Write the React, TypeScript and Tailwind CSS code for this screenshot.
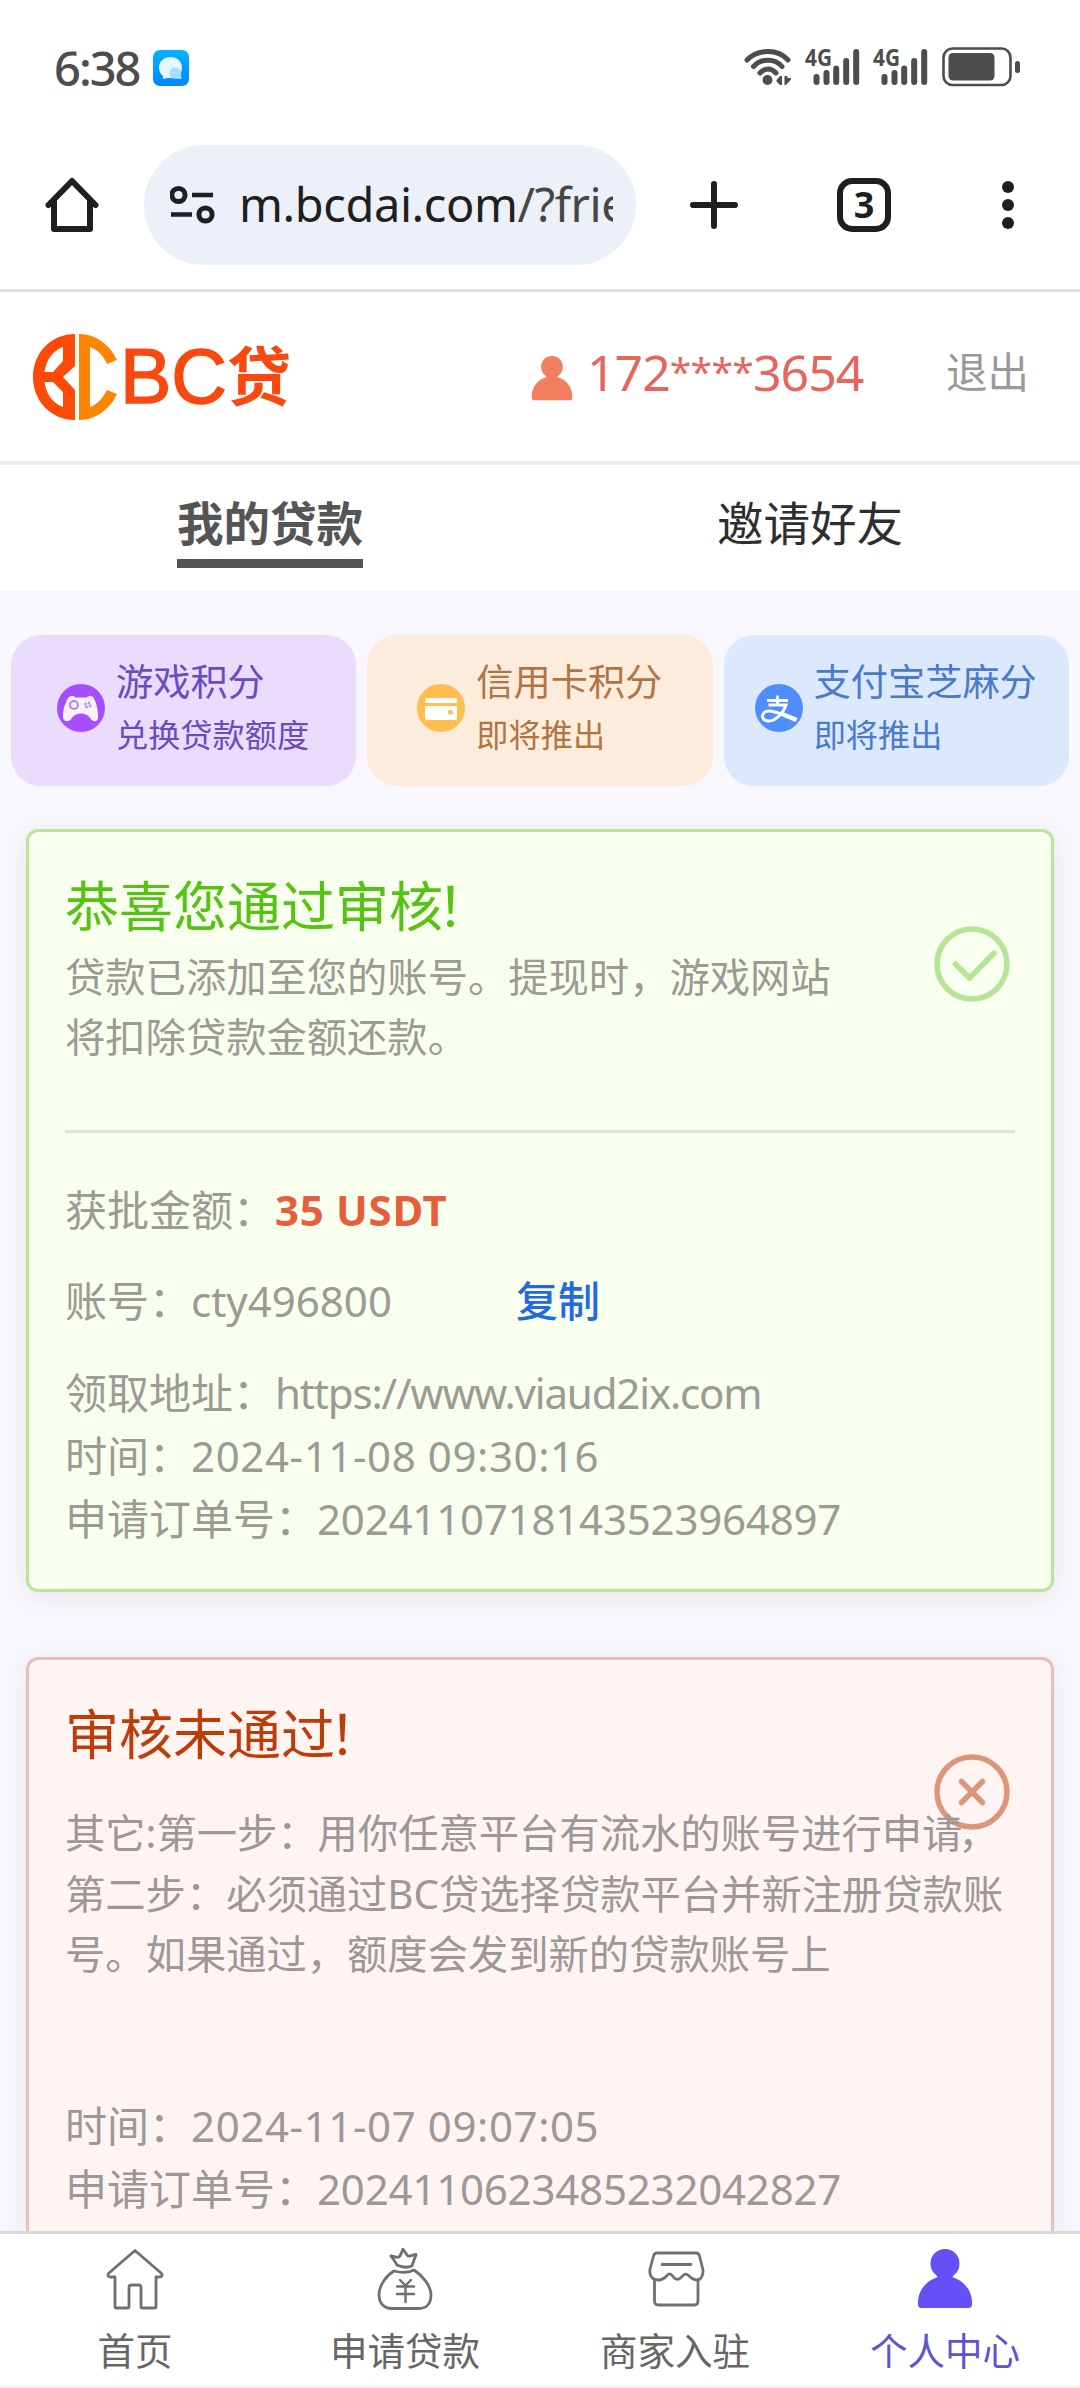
import type { ReactNode } from "react";

interface PointCard {
  title: string;
  sub: string;
  box: string;
  icon: ReactNode;
}

interface NavItem {
  label: string;
  color: string;
  icon: ReactNode;
}

const personPath = "M29 1C20.500 1 14.500 7.500 14.500 15.500C14.500 20.500 16.500 24.500 20.500 27.500C22 28.700 21.500 29.300 20 29.800C9.500 33.500 2 43 2 54V56.500C2 58.500 3.200 60 5.200 60H52.800C54.800 60 56 58.500 56 56.500V54C56 43 48.500 33.500 38 29.800C36.500 29.300 36 28.700 37.500 27.500C41.500 24.500 43.500 20.500 43.500 15.500C43.500 7.500 37.500 1 29 1Z";

const pointCards: PointCard[] = [
  {
    title: "游戏积分",
    sub: "兑换贷款额度",
    box: "bg-[#e9dcfc] text-[#6b4bbf] pl-[46px]",
    icon: (
      <svg className="w-12 h-12 shrink-0" viewBox="0 0 48 48">
        <circle cx="24" cy="24" r="24" fill="#a64dff" />
        <path d="M12 13C14 11.500 17 12 18.500 13.500H29.500C31 12 34 11.500 36 13C39.500 18 41.500 27 41 34C40.500 38 37 38 34 35.500C32 31.500 28 29.500 24 29.500C20 29.500 16 31.500 14 35.500C11 38 7.500 38 6 34C5.500 27 8 18 12 13Z" fill="#f8efff" />
        <circle cx="17" cy="21" r="4" fill="none" stroke="#a98be0" strokeWidth="2" />
        <g fill="#b69ae0"><circle cx="28.500" cy="20" r="1.400" /><circle cx="32" cy="19" r="1.400" /><circle cx="29.500" cy="23" r="1.400" /><circle cx="33" cy="22" r="1.400" /></g>
      </svg>
    ),
  },
  {
    title: "信用卡积分",
    sub: "即将推出",
    box: "bg-[#fdecdc] text-[#b07545] pl-[50px]",
    icon: (
      <svg className="w-12 h-12 shrink-0" viewBox="0 0 48 48">
        <circle cx="24" cy="24" r="24" fill="#ffbe4f" />
        <path d="M10 14H38A2 2 0 0 1 40 16V19H8V16A2 2 0 0 1 10 14ZM8 22H40V34A2 2 0 0 1 38 36H10A2 2 0 0 1 8 34Z" fill="#fff" />
        <rect x="31" y="26" width="5" height="4.500" rx="1" fill="#f3c377" />
      </svg>
    ),
  },
  {
    title: "支付宝芝麻分",
    sub: "即将推出",
    box: "bg-[#dce8fb] text-[#4a7bc8] pl-[31px]",
    icon: (
      <svg className="w-12 h-12 shrink-0" viewBox="0 0 48 48" fill="none" stroke="#fff">
        <circle cx="24" cy="24" r="24" fill="#508dff" stroke="none" />
        <path d="M12 16.500H33M22.500 11.500V20.500" strokeWidth="2.800" />
        <path d="M13.500 21H31C29 27 24 33 18.500 36C14 38 8.500 37 7.500 33C7 29 10.500 26.500 15 27C23 28 32 32 41.500 35.500" strokeWidth="3" />
        <path d="M27 30L41.500 36" strokeWidth="4.500" />
      </svg>
    ),
  },
];

const navItems: NavItem[] = [
  {
    label: "首页",
    color: "text-[#666]",
    icon: (
      <path d="M29 2.500L3 25C1 27 2 29 4.500 29H9V58.500Q9 60 10.500 60H21.500Q23 60 23 58.500V39.500Q23 37 25.500 37H32.500Q35 37 35 39.500V58.500Q35 60 36.500 60H48.500Q50 60 50 58.500V29H53.500C56 29 57 27 55 25Z" />
    ),
  },
  {
    label: "申请贷款",
    color: "text-[#666]",
    icon: (
      <>
        <path d="M21 17C19 13 17 11 15 8C18 8 20 10 23 9C25 7 26 4 27 1C29 3.500 30 6 32 8C35 8.500 37 6.500 40 6.500C39 10 37 14 36 18C31 20 26 19.500 21 17ZM18 23C25 25 32 25 38 22C47 28 55 38 55 47C55 56 50 60.500 43 60.500H16C8 60.500 3 55 3 47C3 37 11 27 18 23Z" />
        <path d="M24 32L29.500 37.500L35 32M21 38.500H38M21 46H38M29.500 38V54" strokeWidth="2.400" />
      </>
    ),
  },
  {
    label: "商家入驻",
    color: "text-[#666]",
    icon: (
      <>
        <path d="M11 5H50C52 5 53 6 53.500 8L57 22C57.500 27 55 32 51 32C47 32 45 30 42.500 27.500C40 25.500 39 25.500 37 27.500C33 32.500 30 32.500 27 28.500C24 25 23 25.500 21 27.500C18 31 15 32 12 32C6 32 3 27 4 21L7.500 8C8 6 9 5 11 5Z" />
        <path d="M8.500 32V53Q8.500 57 12.500 57H48.500Q52 57 52 53V32M16 16.500H45" />
      </>
    ),
  },
  { label: "个人中心", color: "text-[#6152d2]", icon: <path d={personPath} fill="#6450f5" stroke="none" /> },
];

const Signal = () => (
  <svg className="w-[56px] h-[50px] -mt-[10px] -ml-[2px]" viewBox="-2 -10 56 50">
    <text x="-1" y="20" fontSize="24" fontWeight="700" textLength="27" lengthAdjust="spacingAndGlyphs" fill="#4d4d4d">4G</text>
    <path d="M10.500 31V36M20.500 27V36M30.200 22.500V36M40.200 15V36M50.200 6V36" stroke="#4d4d4d" strokeWidth="6" strokeLinecap="round" />
  </svg>
);

const StatusBar = () => (
  <div className="h-[135px] pt-[46px] pl-[54px] pr-[59px] flex items-start">
    <span className="w-[99px] h-11 leading-[44px] text-[47px] font-medium tracking-[-2px] text-[#4d4d4d] whitespace-nowrap">6:38</span>
    <svg className="w-9 h-9 mt-1" viewBox="0 0 36 36">
      <defs>
        <linearGradient id="msg" x1="0" y1="0" x2="0" y2="1"><stop stopColor="#00b4fd" /><stop offset="1" stopColor="#0086fc" /></linearGradient>
      </defs>
      <rect width="36" height="36" rx="7" fill="url(#msg)" />
      <path d="M17.500 7C11 7 6 11.500 6 17.500C6 21 7.500 24 10 26V29L14 28H20C25.500 26.500 29 23 29 17.500C29 11.500 24 7 17.500 7Z" fill="#e8f6ff" />
      <path d="M19 28.500A6 6 0 1 1 28 25L28.500 29Z" fill="#a5defd" />
    </svg>
    <div className="ml-auto flex items-start gap-[14px]">
      <svg className="w-[48px] h-[40px]" viewBox="0 0 48 40" fill="none" stroke="#4d4d4d" strokeWidth="5" strokeLinecap="round">
        <path d="M3 14C14 2.700 34 2.700 44 14M9.500 20.500C17 12 31 12 38 20.500M16 27C21 21.500 27 21.500 32 27" />
        <circle cx="23.500" cy="34" r="5" fill="#4d4d4d" stroke="none" />
        <path d="M38 30V39H36L32.500 35.500V34L36 30ZM40.500 30V39H42L47 33.500V32H43.500V30Z" fill="#4d4d4d" stroke="none" />
      </svg>
      <Signal />
      <Signal />
      <svg className="w-[79px] h-[41px]" viewBox="0 0 79 41">
        <rect x="1.500" y="2.500" width="67" height="36.500" rx="9" fill="none" stroke="#4d4d4d" strokeWidth="2.600" />
        <rect x="6.500" y="7" width="46" height="27.500" rx="4.500" fill="#4d4d4d" />
        <rect x="73" y="15" width="5" height="12" rx="2.500" fill="#4d4d4d" />
      </svg>
    </div>
  </div>
);

const BrowserBar = () => (
  <div className="h-[157px] pt-[10px] flex border-b-[3px] border-[#e0e0e0]">
    <div className="w-full h-[120px] flex items-center">
      <svg className="w-[54px] h-[56px] ml-[45px]" viewBox="0 0 54 56" fill="none" stroke="#1f1f1f" strokeWidth="6" strokeLinecap="round" strokeLinejoin="round">
        <path d="M3.500 28L27 4L50.500 28M9 24V52H45V24" />
      </svg>
      <div className="w-[492px] h-[120px] ml-[45px] pl-[26px] flex items-center rounded-full bg-[#ecf0f9]">
        <svg className="w-[46px] h-[40px]" viewBox="0 0 46 40" fill="none" stroke="#1f1f1f" strokeWidth="5">
          <circle cx="8.500" cy="10" r="6.600" />
          <circle cx="35.500" cy="29.500" r="6.600" />
          <path d="M22 10H43M1 29.500H22" strokeWidth="4.600" />
        </svg>
        <div className="w-[374px] ml-[23px] -mt-[2px] overflow-hidden whitespace-nowrap text-[47px] leading-[70px] text-[#1f1f1f] tracking-[-0.400px]">
          m.bcdai.com<span className="text-[#444746]">/?frie</span>
        </div>
      </div>
      <svg className="w-12 h-12 ml-[54px]" viewBox="0 0 48 48" stroke="#1f1f1f" strokeWidth="6" strokeLinecap="round">
        <path d="M24 3V45M3 24H45" />
      </svg>
      <div className="w-[54px] h-[54px] ml-[99px] flex items-center justify-center rounded-[15px] border-[6px] border-[#1f1f1f] text-[36px] leading-none font-bold text-[#1f1f1f]">3</div>
      <div className="ml-[111px] flex flex-col gap-[6px]">
        <i className="w-3 h-3 rounded-full bg-[#1f1f1f]" />
        <i className="w-3 h-3 rounded-full bg-[#1f1f1f]" />
        <i className="w-3 h-3 rounded-full bg-[#1f1f1f]" />
      </div>
    </div>
  </div>
);

const Header = () => (
  <header className="h-[173px] flex items-center border-b-[4px] border-[#ebeded]">
    <svg className="w-[85px] h-[88px] ml-[33px]" viewBox="0 0 85 88">
      <path d="M42 1C18 1 0 20 0 44C0 68 18 87 42 87V57L30 44L42 33ZM30 14V28L20 39H11.500C13 28 19 18 30 14ZM11.500 49H20L30 59V74C19 70 13 60 11.500 49Z" fill="#fe4a08" fillRule="evenodd" />
      <path d="M46 1V87C63 87 77 76 84 61L74 57C69 66 65 71 57 74V14C65 17 70 22 74 31L84 27C77 12 63 1 46 1Z" fill="#ff8400" />
    </svg>
    <div className="ml-[2px] -mt-[2px] w-[181px] flex items-center whitespace-nowrap text-[#fa490e]">
      <span className="text-[77px] leading-[88px] font-['Liberation_Sans'] [-webkit-text-stroke:1.500px_#fa490e]">BC</span>
      <span className="text-[64px] leading-[88px] font-bold">贷</span>
    </div>
    <svg className="w-[42px] h-[46px] ml-[230px] mt-[3px]" viewBox="1 0 56 61">
      <path d={personPath} fill="#f07f5f" />
    </svg>
    <div className="ml-[14px] -mt-[9px] w-[280px] whitespace-nowrap text-[50px] leading-[70px] text-[#e8655b] tracking-[-1px]">
      172<span className="relative -top-[5px] text-[39px] leading-none tracking-[-0.700px]">****</span>3654
    </div>
    <span className="ml-[79px] -mt-[9px] text-[41.500px] leading-[60px] text-[#999] whitespace-nowrap">退出</span>
  </header>
);

const Points = () => (
  <div className="mt-[44px] px-[11px] grid grid-cols-3 gap-[11px]">
    {pointCards.map((c) => (
      <div key={c.title} className={`h-[151px] rounded-[30px] flex items-center gap-[11px] pb-[5px] whitespace-nowrap ${c.box}`}>
        {c.icon}
        <div>
          <div className="text-[37.200px] leading-[54px]">{c.title}</div>
          <div className="text-[32.200px] leading-[52px]">{c.sub}</div>
        </div>
      </div>
    ))}
  </div>
);

const Row = ({ label, children }: { label: string; children: ReactNode }) => (
  <div className="flex h-[63px] text-[42px] leading-[63px] whitespace-nowrap">
    <span>{label}：</span>
    {children}
  </div>
);

const Approved = () => (
  <section className="relative mx-[26px] mt-[43px] h-[763px] px-[36px] pt-[39px] rounded-xl border-[3px] border-[#b7e69a] bg-[#f9ffee] text-[#999b94] shadow-[0_6px_24px_rgba(60,40,60,0.08)]">
    <h2 className="text-[54px] leading-[70px] text-[#55c312] whitespace-nowrap">恭喜您通过审核<span className="-ml-[6px]">！</span></h2>
    <p className="mt-[6px] text-[40.300px] leading-[60px] whitespace-nowrap">
      贷款已添加至您的账号。提现时，游戏网站<br />将扣除贷款金额还款。
    </p>
    <svg className="absolute left-[905px] top-[94px] w-[76px] h-[76px]" viewBox="0 0 76 76" fill="none" stroke="#b5e596" strokeWidth="5.500" strokeLinecap="round" strokeLinejoin="round">
      <circle cx="38" cy="38" r="35" />
      <path d="M21.500 38L35.500 52L60 27" />
    </svg>
    <hr className="mt-[63px] border-t-[3px] border-[#dfe1da]" />
    <div className="mt-[45px]">
      <Row label="获批金额"><b className="text-[#e55f3a] tracking-[0.700px]">35 USDT</b></Row>
      <div className="h-7" />
      <Row label="账号">
        <span className="w-[325px]">cty496800</span>
        <a className="text-[#2569df] font-medium">复制</a>
      </Row>
      <div className="h-[29px]" />
      <Row label="领取地址"><span className="tracking-[-1.150px]">https://www.viaud2ix.com</span></Row>
      <Row label="时间"><span className="tracking-[0.600px]">2024-11-08 09:30:16</span></Row>
      <Row label="申请订单号"><span className="tracking-[-0.200px]">2024110718143523964897</span></Row>
    </div>
  </section>
);

const Rejected = () => (
  <section className="relative mx-[26px] mt-[65px] h-[760px] px-[36px] pt-[39px] rounded-xl border-[3px] border-[#ebbdbe] bg-[#fef4f2] text-[#9b9896] shadow-[0_6px_24px_rgba(60,40,60,0.08)]">
    <svg className="absolute left-[905px] top-[94px] w-[76px] h-[76px]" viewBox="0 0 76 76" fill="none" stroke="#dd967c" strokeWidth="5.500" strokeLinecap="round">
      <circle cx="38" cy="38" r="35" />
      <path d="M27.500 27.500L48.500 48.500M48.500 27.500L27.500 48.500" />
    </svg>
    <h2 className="relative text-[54px] leading-[70px] text-[#bd3c08] whitespace-nowrap">审核未通过<span className="-ml-[6px]">！</span></h2>
    <p className="relative mt-[34px] text-[40.300px] leading-[60.500px] whitespace-nowrap">
      其它:第一步：用你任意平台有流水的账号进行申请<span className="-ml-[4px]">，</span><br />
      第二步：必须通过BC贷选择贷款平台并新注册贷款账<br />
      号。如果通过，额度会发到新的贷款账号上
    </p>
    <div className="mt-[109px]">
      <Row label="时间"><span className="tracking-[0.600px]">2024-11-07 09:07:05</span></Row>
      <Row label="申请订单号"><span className="tracking-[-0.200px]">2024110623485232042827</span></Row>
    </div>
  </section>
);

const BottomNav = () => (
  <nav className="relative h-[157px] shrink-0 grid grid-cols-4 bg-white border-t-[3px] border-b-2 border-t-[#d9d9d9] border-b-[#eee]">
    {navItems.map((n) => (
      <div key={n.label} className={`flex flex-col items-center pt-[14px] ${n.color}`}>
        <svg className="w-[60px] h-[62px]" viewBox="-1 0 60 62" fill="none" stroke="#707070" strokeWidth="2.800" strokeLinejoin="round" strokeLinecap="round">{n.icon}</svg>
        <span className="mt-[14px] text-[37.500px] leading-[54px] whitespace-nowrap">{n.label}</span>
      </div>
    ))}
  </nav>
);

const App = () => (
  <div className="w-[1080px] h-[2388px] overflow-hidden flex flex-col bg-white font-['Noto_Sans','Noto_Sans_CJK_SC',sans-serif]">
    <StatusBar />
    <BrowserBar />
    <Header />
    <div className="h-[126px] shrink-0 grid grid-cols-2 justify-items-center text-[46.500px] leading-[66px]">
      <div className="h-[103px] pt-[25px] border-b-[9px] border-[#555] font-bold text-[#555]">我的贷款</div>
      <div className="pt-[25px] text-[#2e2e2e]">邀请好友</div>
    </div>
    <main className="flex-1 min-h-0 overflow-hidden bg-[#f7f7fd]">
      <Points />
      <Approved />
      <Rejected />
    </main>
    <BottomNav />
  </div>
);

export default App;
